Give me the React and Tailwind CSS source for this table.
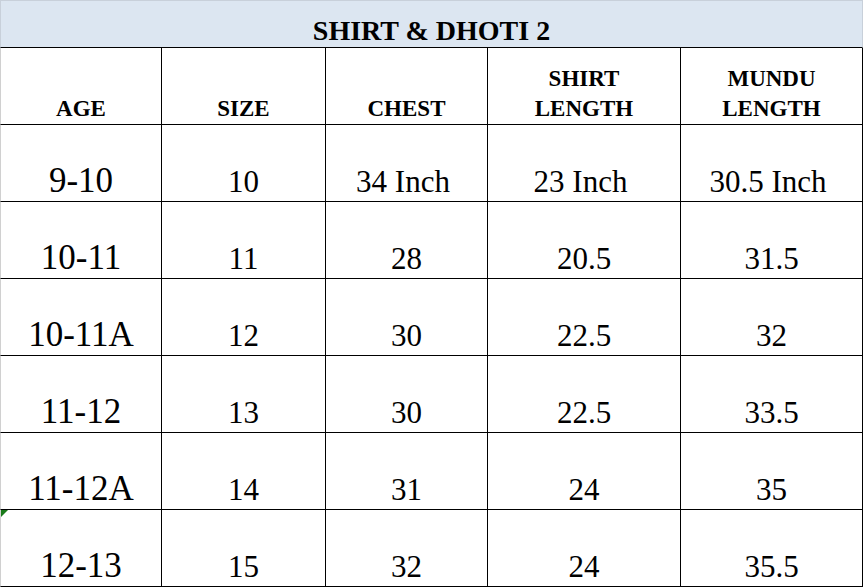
const rows = [
  ["9-10", "10", "34 Inch", "23 Inch", "30.5 Inch"],
  ["10-11", "11", "28", "20.5", "31.5"],
  ["10-11A", "12", "30", "22.5", "32"],
  ["11-12", "13", "30", "22.5", "33.5"],
  ["11-12A", "14", "31", "24", "35"],
  ["12-13", "15", "32", "24", "35.5"],
];

const headers = [["AGE"], ["SIZE"], ["CHEST"], ["SHIRT", "LENGTH"], ["MUNDU", "LENGTH"]];

const App = () => {
  return (
    <div className="w-[864px] h-[587px] bg-white text-black overflow-hidden font-['Liberation_Serif','DejaVu_Serif',serif]">
      <div className="w-[863px] h-[48px] bg-[#dce6f1] border-l border-t border-r border-[#c8d0da] border-b border-b-black flex items-end justify-center pb-[2px]">
        <span className="text-[28px] font-bold leading-none">SHIRT &amp; DHOTI 2</span>
      </div>
      <div className="grid grid-cols-[162px_164px_162px_193px_182px]">
        {headers.map((h, i) => (
          <div
            key={i}
            className={`h-[77px] border-b border-r border-black flex flex-col items-center justify-end text-[23px] font-bold leading-[30px] ${i === 0 ? "border-l border-l-[#d0d0d0]" : ""}`}
          >
            {h.map((t) => (
              <span key={t}>{t}</span>
            ))}
          </div>
        ))}
        {rows.map((r, ri) =>
          r.map((c, ci) => (
            <div
              key={ri + "-" + ci}
              className={`relative h-[77px] border-b border-r border-black flex items-end justify-center leading-none ${ci === 0 ? "border-l border-l-[#d0d0d0] text-[35px] pb-[3px]" : "text-[31px] pb-[4px]"} ${c.includes("Inch") ? "pr-[7px]" : ""}`}
            >
              {ri === 5 && ci === 0 && (
                <span className="absolute left-0 top-0 w-0 h-0 border-t-[7px] border-r-[7px] border-t-[#1a7a1a] border-r-transparent" />
              )}
              <span>{c}</span>
            </div>
          ))
        )}
      </div>
    </div>
  );
};

export default App;
